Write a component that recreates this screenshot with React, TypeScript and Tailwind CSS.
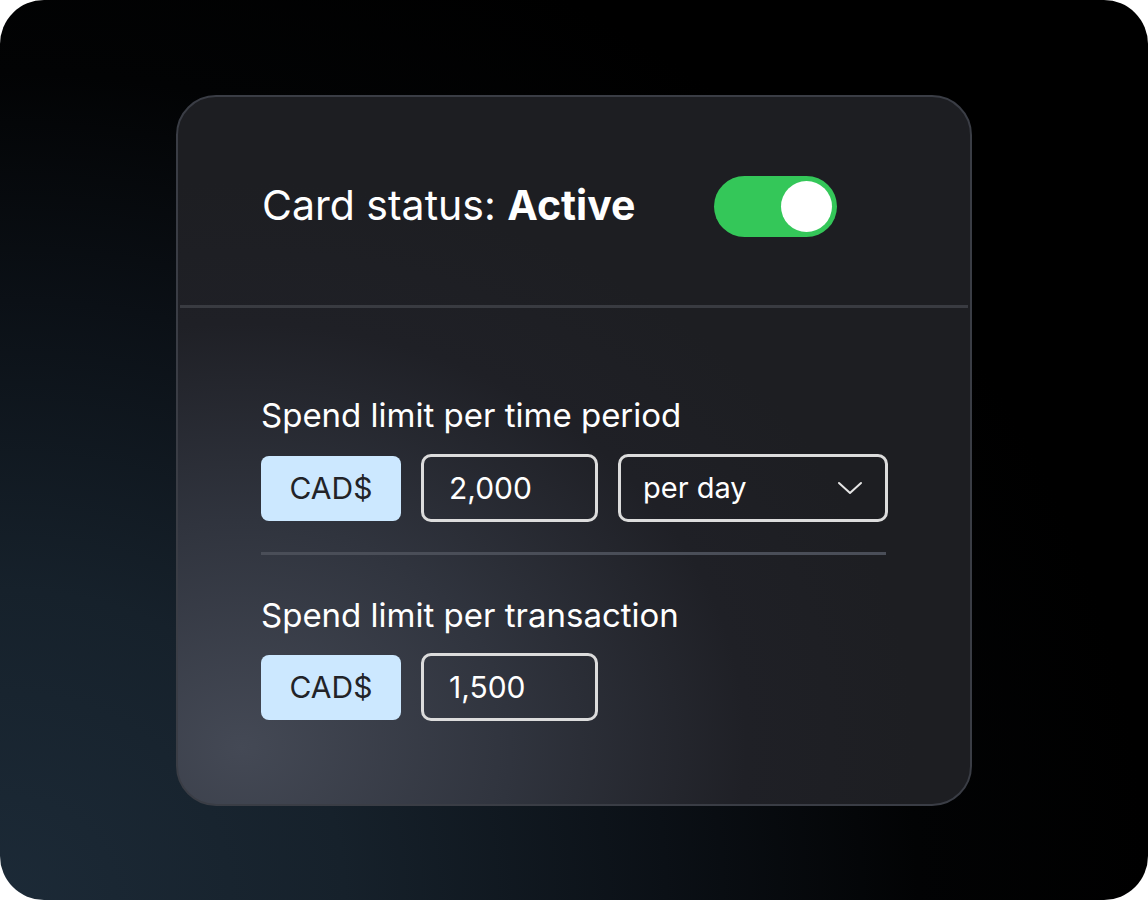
function Toggle() {
  return (
    <div className="flex h-[61px] w-[123px] items-center justify-end rounded-full bg-[#34c759] pr-[5px]">
      <div className="h-[51px] w-[51px] rounded-full bg-white" />
    </div>
  );
}

function CurrencyChip() {
  return (
    <div className="flex h-[65px] w-[140px] items-center justify-center rounded-[8px] bg-[#cce8ff] text-[30px] text-[#222327]">
      CAD$
    </div>
  );
}

function AmountBox({ value }: { value: string }) {
  return (
    <div className="flex h-[68px] w-[177px] items-center rounded-[10px] border-[3px] border-[#dcdcdc] pl-[25px] text-[30px] text-white">
      {value}
    </div>
  );
}

function PeriodSelect() {
  return (
    <div className="flex h-[68px] w-[270px] items-center justify-between rounded-[10px] border-[3px] border-[#dcdcdc] pl-[22px] pr-[22px] text-[29px] text-white">
      <span>per day</span>
      <svg width="26" height="16" viewBox="0 0 26 16" fill="none">
        <path d="M2 3l11 10L24 3" stroke="#e5e5e5" strokeWidth="2" strokeLinecap="round" strokeLinejoin="round" />
      </svg>
    </div>
  );
}

export default function App() {
  return (
    <div className="h-[900px] w-[1148px] bg-white" style={{ fontFamily: "Inter, 'Noto Sans', sans-serif" }}>
      <div className="h-[900px] w-[1148px] overflow-hidden rounded-[44px] bg-[radial-gradient(ellipse_100%_115%_at_0%_100%,#1c2a37_0%,#16212b_30%,#0b1016_58%,#020304_80%,#000_100%)] pl-[176px] pt-[95px]">
        <div className="flex h-[711px] w-[796px] flex-col rounded-[40px] border-2 border-[#3a3d45] bg-[radial-gradient(ellipse_85%_80%_at_8%_92%,#444955_0%,#30343e_40%,#1f2026_75%,#1d1e22_100%)]">
          <div className="flex h-[208px] items-center pl-[84px] pt-[10px]">
            <div className="flex w-[575px] items-center justify-between">
              <span className="text-[41px] text-white">
                Card status: <span className="font-bold">Active</span>
              </span>
              <Toggle />
            </div>
          </div>
          <div className="mx-[2px] h-[3px] bg-[#393b41]" />
          <div className="flex flex-col pl-[83px] pt-[87px]">
            <div className="text-[33px] leading-[40px] text-white">Spend limit per time period</div>
            <div className="mt-[19px] flex items-center gap-[20px]">
              <CurrencyChip />
              <AmountBox value="2,000" />
              <PeriodSelect />
            </div>
            <div className="mt-[30px] h-[3px] w-[625px] bg-[#4a4e58]" />
            <div className="mt-[40px] text-[33px] leading-[40px] text-white">Spend limit per transaction</div>
            <div className="mt-[18px] flex items-center gap-[20px]">
              <CurrencyChip />
              <AmountBox value="1,500" />
            </div>
          </div>
        </div>
      </div>
    </div>
  );
}
